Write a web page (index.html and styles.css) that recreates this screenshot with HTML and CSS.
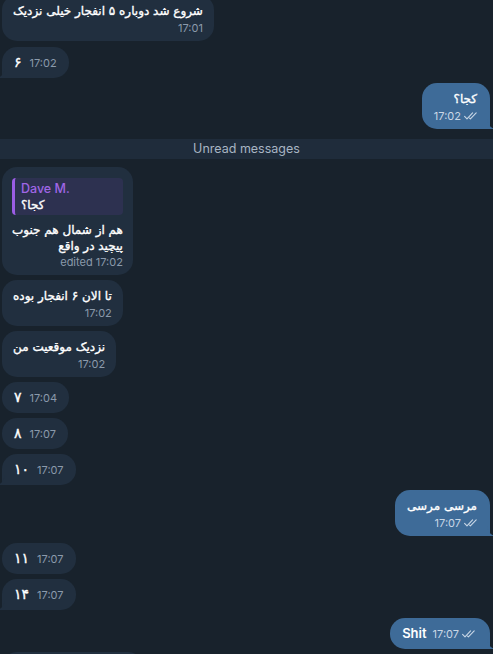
FILE: index.html
```html
<!DOCTYPE html>
<html lang="fa">
<head>
<meta charset="utf-8">
<title>Chat</title>
<link rel="stylesheet" href="styles.css">
</head>
<body>
<div class="chat">
  <div class="row in first">
    <div class="bubble multi">
      <div class="text" dir="rtl">شروع شد دوباره ۵ انفجار خیلی نزدیک</div>
      <div class="meta"><span class="time">17:01</span></div>
    </div>
  </div>
  <div class="row in g6">
    <div class="bubble single tail-l">
      <span class="text num" dir="rtl">۶</span><span class="time">17:02</span>
      <svg class="tail left" width="8" height="10" viewBox="0 0 8 10"><path d="M8 0 V10 H0 C3.5 9.3 7 6.5 8 0 Z"/></svg>
    </div>
  </div>
  <div class="row out g5">
    <div class="bubble multi outb tail-r">
      <div class="text" dir="rtl">کجا؟</div>
      <div class="meta"><span class="time">17:02</span><svg class="checks" width="13" height="8" viewBox="0 0 13 8"><path d="M0.6 4.4 L3 6.9 L8.6 0.8 M5.6 6.1 L6.4 6.9 L12.2 0.8"/></svg></div>
      <svg class="tail right" width="8" height="10" viewBox="0 0 8 10"><path d="M0 0 V10 H8 C4.5 9.3 1 6.5 0 0 Z"/></svg>
    </div>
  </div>
  <div class="unread">Unread messages</div>
  <div class="row in g8">
    <div class="bubble reply-bubble">
      <div class="reply">
        <div class="reply-name">Dave M.</div>
        <div class="reply-text" dir="rtl">کجا؟</div>
      </div>
      <div class="text lines" dir="rtl">هم از شمال هم جنوب<br>پیچید در واقع</div>
      <div class="meta"><span class="time">edited 17:02</span></div>
    </div>
  </div>
  <div class="row in g5">
    <div class="bubble multi">
      <div class="text" dir="rtl">تا الان ۶ انفجار بوده</div>
      <div class="meta"><span class="time">17:02</span></div>
    </div>
  </div>
  <div class="row in g5">
    <div class="bubble multi">
      <div class="text" dir="rtl">نزدیک موقعیت من</div>
      <div class="meta"><span class="time">17:02</span></div>
    </div>
  </div>
  <div class="row in g5">
    <div class="bubble single"><span class="text num" dir="rtl">۷</span><span class="time">17:04</span></div>
  </div>
  <div class="row in g5">
    <div class="bubble single"><span class="text num" dir="rtl">۸</span><span class="time">17:07</span></div>
  </div>
  <div class="row in g5">
    <div class="bubble single tail-l"><span class="text num" dir="rtl">۱۰</span><span class="time">17:07</span>
      <svg class="tail left" width="8" height="10" viewBox="0 0 8 10"><path d="M8 0 V10 H0 C3.5 9.3 7 6.5 8 0 Z"/></svg>
    </div>
  </div>
  <div class="row out g5">
    <div class="bubble multi outb tail-r">
      <div class="text" dir="rtl">مرسی مرسی</div>
      <div class="meta"><span class="time">17:07</span><svg class="checks" width="13" height="8" viewBox="0 0 13 8"><path d="M0.6 4.4 L3 6.9 L8.6 0.8 M5.6 6.1 L6.4 6.9 L12.2 0.8"/></svg></div>
      <svg class="tail right" width="8" height="10" viewBox="0 0 8 10"><path d="M0 0 V10 H8 C4.5 9.3 1 6.5 0 0 Z"/></svg>
    </div>
  </div>
  <div class="row in g7">
    <div class="bubble single"><span class="text num" dir="rtl">۱۱</span><span class="time">17:07</span></div>
  </div>
  <div class="row in g5">
    <div class="bubble single tail-l"><span class="text num" dir="rtl">۱۴</span><span class="time">17:07</span>
      <svg class="tail left" width="8" height="10" viewBox="0 0 8 10"><path d="M8 0 V10 H0 C3.5 9.3 7 6.5 8 0 Z"/></svg>
    </div>
  </div>
  <div class="row out g8">
    <div class="bubble single outb tail-r"><span class="text latin">Shit</span><span class="time">17:07<svg class="checks" width="13" height="8" viewBox="0 0 13 8"><path d="M0.6 4.4 L3 6.9 L8.6 0.8 M5.6 6.1 L6.4 6.9 L12.2 0.8"/></svg></span>
      <svg class="tail right" width="8" height="10" viewBox="0 0 8 10"><path d="M0 0 V10 H8 C4.5 9.3 1 6.5 0 0 Z"/></svg>
    </div>
  </div>
  <div class="row in g3">
    <div class="bubble last"></div>
  </div>
</div>
</body>
</html>
```
FILE: styles.css
```css
* { box-sizing: border-box; }
html, body {
  margin: 0;
  padding: 0;
  background: #18222c;
  height: 100%;
  overflow: hidden;
}
body {
  font-family: Inter, "DejaVu Sans", sans-serif;
  color: #ffffff;
  font-size: 13px;
}
.chat {
  display: flex;
  flex-direction: column;
}
.row {
  display: flex;
  padding: 0 3px 0 2px;
}
.row.in { justify-content: flex-start; }
.row.out { justify-content: flex-end; }
.row.first { margin-top: -5px; }
.g3 { margin-top: 3px; }
.g5 { margin-top: 5px; }
.g6 { margin-top: 6px; }
.g7 { margin-top: 7px; }
.g8 { margin-top: 8px; }

.bubble {
  position: relative;
  background: #212f3f;
  border-radius: 15px;
}
.bubble.outb { background: #3e6b98; }
.bubble.tail-l { border-bottom-left-radius: 3px; }
.bubble.tail-r { border-bottom-right-radius: 3px; }

.bubble.multi {
  padding: 8px 11px 5px 11px;
}
.bubble.multi.outb { padding: 8px 13px 5px 12px; }
.text {
  font-family: "DejaVu Sans", sans-serif;
  font-size: 12px;
  -webkit-text-stroke: 0.35px #ffffff;
  white-space: nowrap;
}
.bubble.multi .text {
  line-height: 17px;
  text-align: right;
}
.meta {
  display: flex;
  justify-content: flex-end;
  align-items: center;
  gap: 3px;
  line-height: 16px;
  height: 16px;
}
.time {
  font-size: 11px;
  color: #8b9aab;
  display: inline-flex;
  align-items: center;
  gap: 3px;
  white-space: nowrap;
}
.outb .time { color: #c9d7e6; }
.checks {
  fill: none;
  stroke: #c9d7e6;
  stroke-width: 1.1;
  stroke-linecap: round;
  stroke-linejoin: round;
}

.bubble.single {
  display: flex;
  align-items: center;
  gap: 8px;
  height: 31px;
  padding: 0 12px 0 12px;
}
.bubble.single .text {
  font-size: 12.5px;
  line-height: 17px;
}
.bubble.single .text.num {
  font-size: 14px;
}
.bubble.single .text.latin {
  font-family: Inter, sans-serif;
  font-weight: 600;
  font-size: 13px;
  -webkit-text-stroke: 0;
}
.bubble.single.outb { padding: 0 15px 0 12px; gap: 6px; }

.tail {
  position: absolute;
  bottom: 0;
}
.tail.left { left: -5px; fill: #212f3f; }
.tail.right { right: -5px; fill: #3e6b98; }

.unread {
  margin-top: 10px;
  height: 20px;
  line-height: 20px;
  background: #1f2c3b;
  color: #a8b5c3;
  text-align: center;
  font-size: 12.5px;
}

.bubble.reply-bubble {
  padding: 11px 10px 5px 10px;
}
.reply {
  background: #2d3150;
  border-left: 3px solid #9b5de5;
  border-radius: 4px;
  padding: 3px 6px 1px 6px;
  height: 37px;
}
.reply-name {
  color: #a066e6;
  font-size: 12.5px;
  line-height: 16px;
  font-weight: 500;
}
.reply-text {
  text-align: left;
  font-family: "DejaVu Sans", sans-serif;
  font-size: 12px;
  -webkit-text-stroke: 0.35px #ffffff;
  line-height: 17px;
}
.reply-bubble .text.lines {
  margin-top: 7px;
  line-height: 16px;
  text-align: right;
}
.bubble.last {
  width: 141px;
  height: 40px;
}
```
